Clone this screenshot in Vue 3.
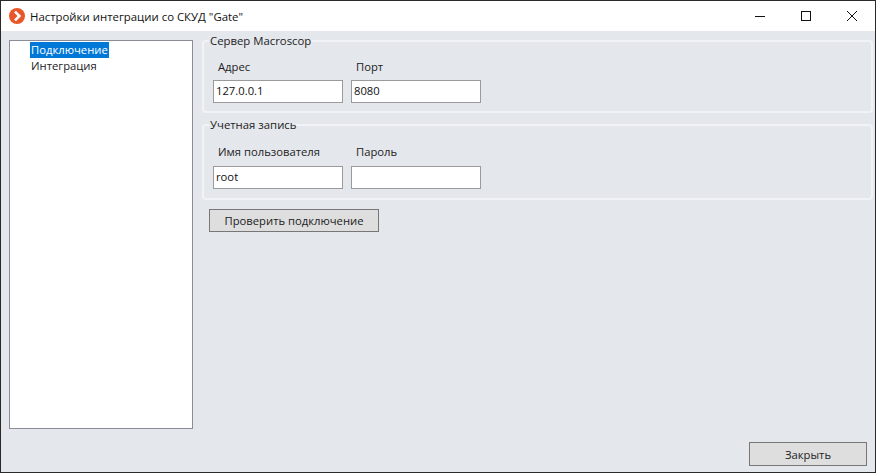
<script setup>
const groups = [
  { title: 'Сервер Macroscop', fields: [
    { label: 'Адрес', value: '127.0.0.1' },
    { label: 'Порт', value: '8080' }
  ] },
  { title: 'Учетная запись', fields: [
    { label: 'Имя пользователя', value: 'root' },
    { label: 'Пароль', value: '' }
  ] }
]
</script>

<template>
  <div class="window">
    <header class="titlebar">
      <svg class="logo" width="16" height="16" viewBox="0 0 16 16">
        <circle cx="8" cy="8" r="8" fill="#e8562a" />
        <path d="M6 3.6 L10.4 8 L6 12.4" fill="none" stroke="#fff" stroke-width="2.6" />
      </svg>
      <span class="title">Настройки интеграции со СКУД "Gate"</span>
      <div class="controls">
        <svg class="ctl" width="46" height="30" viewBox="0 0 46 30"><path d="M18 15.5h10" stroke="#111" /></svg>
        <svg class="ctl" width="46" height="30" viewBox="0 0 46 30"><rect x="18.5" y="10.5" width="9" height="9" fill="none" stroke="#111" /></svg>
        <svg class="ctl" width="46" height="30" viewBox="0 0 46 30"><path d="M18 10l10 10M28 10l-10 10" stroke="#111" /></svg>
      </div>
    </header>
    <main class="body">
      <div class="columns">
        <nav class="tree">
          <div class="node"><span class="selected">Подключение</span></div>
          <div class="node"><span>Интеграция</span></div>
        </nav>
        <section class="panel">
          <fieldset v-for="g in groups" :key="g.title" class="group">
            <legend>{{ g.title }}</legend>
            <div class="fields">
              <label v-for="f in g.fields" :key="f.label" class="field">
                <span class="caption">{{ f.label }}</span>
                <input class="input" type="text" :value="f.value" />
              </label>
            </div>
          </fieldset>
          <button class="btn check">Проверить подключение</button>
        </section>
      </div>
      <footer class="footer">
        <button class="btn close">Закрыть</button>
      </footer>
    </main>
  </div>
</template>

<style>
html, body { margin: 0; padding: 0; }
</style>

<style scoped>
.window {
  width: 876px;
  height: 473px;
  box-sizing: border-box;
  border: 1px solid #2a2a2a;
  display: flex;
  flex-direction: column;
  background: #e4e7ec;
  font-family: "Open Sans", Roboto, sans-serif;
  font-size: 11.25px;
  color: #1a1a1a;
  overflow: hidden;
}
.titlebar {
  height: 30px;
  flex: none;
  background: #fff;
  display: flex;
  align-items: center;
  padding-left: 8px;
}
.logo { flex: none; }
.title { margin-left: 5px; color: #111; font-size: 11.4px; }
.controls { margin-left: auto; display: flex; }
.ctl { display: block; }
.body {
  flex: 1;
  display: flex;
  flex-direction: column;
  padding: 3px 8px 6px 8px;
  min-height: 0;
}
.columns { flex: 1; display: flex; min-height: 0; }
.tree {
  width: 184px;
  height: 389px;
  margin-top: 6px;
  box-sizing: border-box;
  flex: none;
  background: #fff;
  border: 1px solid #8a8c9a;
  padding: 1px 0 0 20px;
}
.node { height: 16px; line-height: 16px; }
.node span { display: inline-block; padding: 0 1px; color: #222; }
.node .selected { background: #0078d7; color: #fff; }
.panel {
  flex: 1;
  margin-left: 9px;
  margin-right: -6px;
  display: flex;
  flex-direction: column;
  align-items: flex-start;
}
.group {
  align-self: stretch;
  margin: 0;
  padding: 0;
  border: 2px solid #f1f3f6;
  border-radius: 4px;
  height: 79px;
  box-sizing: border-box;
  min-width: 0;
}
.group + .group { margin-top: 5px; height: 82px; }
.group legend {
  padding: 0 0 0 1px;
  margin-left: 5px;
  line-height: 14px;
  font-size: 11.35px;
  color: #222;
}
.fields {
  display: flex;
  gap: 8px;
  padding: 11px 0 0 9px;
}
.group + .group .fields { padding-top: 12px; }
.group + .group .caption { margin-bottom: 6px; }
.field { display: flex; flex-direction: column; width: 130px; }
.caption { height: 16px; line-height: 16px; padding-left: 5px; margin-bottom: 5px; color: #222; white-space: nowrap; }
.input {
  width: 130px;
  height: 23px;
  box-sizing: border-box;
  border: 1px solid #9a9a9a;
  background: #fff;
  padding: 0 2px 3px;
  font: inherit;
  color: #111;
  outline: none;
  border-radius: 0;
}
.btn {
  box-sizing: border-box;
  background: #dedede;
  border: 1px solid #777;
  font: inherit;
  color: #222;
  padding: 0;
  border-radius: 0;
}
.check { width: 170px; height: 23px; margin: 9px 0 0 7px; }
.footer { display: flex; justify-content: flex-end; flex: none; height: 24px; }
.close { width: 118px; height: 24px; margin-right: 0; }
</style>
